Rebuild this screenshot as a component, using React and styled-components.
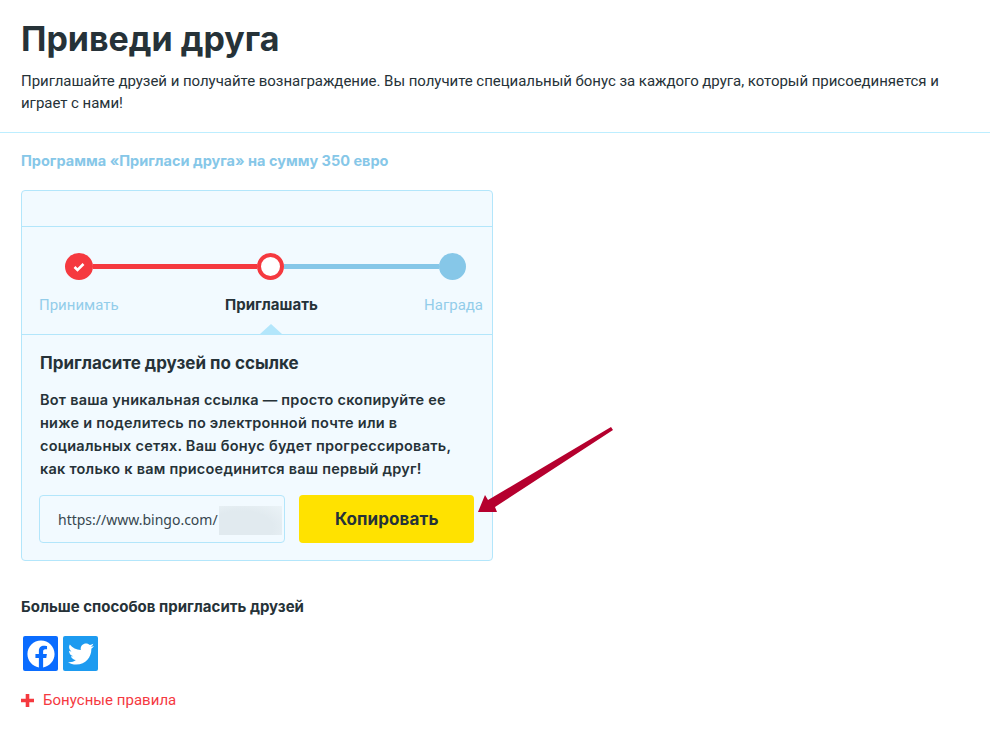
import styled, { createGlobalStyle } from "styled-components";
import { FaFacebook, FaTwitter } from "react-icons/fa";

const GlobalStyle = createGlobalStyle`
  html, body {
    margin: 0;
    padding: 0;
    background: #fff;
    font-family: Roboto, "Liberation Sans", sans-serif;
    color: #263238;
  }
`;

const Page = styled.div`
  position: relative;
  width: 990px;
  height: 742px;
  overflow: hidden;
`;

const Header = styled.header`
  padding: 18px 21px 18px;
  border-bottom: 1px solid #bdeeff;
`;

const Title = styled.h1`
  margin: 0 0 10px;
  font-family: Inter, sans-serif;
  font-size: 34px;
  line-height: 42px;
  font-weight: 700;
  color: #263238;
`;

const Lead = styled.p`
  margin: 0;
  width: 940px;
  font-size: 15px;
  line-height: 22px;
  letter-spacing: -0.035px;
  color: #263238;
`;

const Content = styled.main`
  padding: 18px 21px 0;
`;

const ProgramTitle = styled.h2`
  margin: 0 0 20px;
  font-family: Inter, sans-serif;
  font-size: 14.5px;
  line-height: 19px;
  font-weight: 700;
  color: #86c7e8;
`;

const Card = styled.section`
  width: 472px;
  box-sizing: border-box;
  background: #f2faff;
  border: 1px solid #b3e6fb;
  border-radius: 4px;
`;

const CardTop = styled.div`
  height: 35px;
  border-bottom: 1px solid #b3e6fb;
`;

const Stepper = styled.div`
  position: relative;
  height: 107px;
  border-bottom: 1px solid #b3e6fb;

  &::after {
    content: "";
    position: absolute;
    left: 238px;
    bottom: 0;
    border-left: 11px solid transparent;
    border-right: 11px solid transparent;
    border-bottom: 10px solid #b3e6fb;
  }
`;

const Track = styled.div`
  display: flex;
  align-items: center;
  padding: 26px 26px 0 43px;
`;

const Dot = styled.div`
  flex: none;
  display: flex;
  align-items: center;
  justify-content: center;
  box-sizing: border-box;
  width: ${(p) => p.$size || 27}px;
  height: 27px;
  border-radius: 50%;
  background: ${(p) => p.$fill};
  border: ${(p) => (p.$ring ? `4px solid ${p.$ring}` : "none")};
`;

const Line = styled.div`
  flex: none;
  width: ${(p) => p.$width}px;
  height: 5px;
  background: ${(p) => p.$color};
`;

const Labels = styled.div`
  display: grid;
  grid-template-columns: 186px auto 1fr;
  padding: 16px 9px 0 17px;
  line-height: 18px;
`;

const Label = styled.span`
  color: ${(p) => (p.$active ? "#263238" : "#93cdea")};
  font-family: ${(p) => (p.$active ? "Inter, sans-serif" : "Roboto, sans-serif")};
  font-weight: ${(p) => (p.$active ? 700 : 400)};
  font-size: 15px;
  justify-self: ${(p) => (p.$end ? "end" : "start")};
`;

const CardBody = styled.div`
  padding: 18px 18px 17px;
`;

const BodyTitle = styled.h3`
  margin: 0 0 15px;
  font-family: Inter, sans-serif;
  font-size: 17px;
  line-height: 20px;
  font-weight: 700;
  color: #263238;
`;

const BodyText = styled.p`
  margin: 0 0 15px;
  max-width: 420px;
  font-family: Inter, sans-serif;
  font-size: 14.5px;
  line-height: 23px;
  font-weight: 600;
  letter-spacing: 0.24px;
  color: #263238;
`;

const CopyRow = styled.div`
  display: flex;
  gap: 14px;
  margin-left: -1px;
`;

const LinkBox = styled.div`
  position: relative;
  width: 247px;
  height: 48px;
  box-sizing: border-box;
  padding-left: 18px;
  display: flex;
  align-items: center;
  border: 1px solid #b3e6fb;
  border-radius: 4px;
  font-family: "Noto Sans", sans-serif;
  font-size: 14px;
  color: #37474f;
`;

const Blur = styled.div`
  position: absolute;
  left: 179px;
  top: 10px;
  width: 63px;
  height: 29px;
  background: radial-gradient(ellipse at 35% 75%, #e1eaef 55%, #ebf3f7 100%);
`;

const CopyButton = styled.button`
  width: 175px;
  height: 48px;
  border: none;
  border-radius: 4px;
  background: #ffe200;
  color: #263238;
  font-family: Inter, sans-serif;
  font-size: 17px;
  font-weight: 700;
  letter-spacing: 0.1px;
`;

const MoreTitle = styled.h4`
  margin: 37px 0 20px;
  font-family: Inter, sans-serif;
  font-size: 15px;
  line-height: 18px;
  font-weight: 700;
  color: #263238;
`;

const Socials = styled.div`
  display: flex;
  gap: 5px;
  padding-left: 2px;
`;

const Social = styled.a`
  display: flex;
  align-items: center;
  justify-content: center;
  width: 35px;
  height: 35px;
  border-radius: 2px;
  color: #fff;
  background: ${(p) => p.$bg};
`;

const RulesLink = styled.a`
  display: flex;
  align-items: center;
  gap: 9px;
  margin-top: 20px;
  font-size: 15px;
  line-height: 18px;
  letter-spacing: 0.03px;
  color: #f5393f;
`;

const Arrow = styled.svg`
  position: absolute;
  left: 470px;
  top: 420px;
`;

export default function App() {
  return (
    <Page>
      <GlobalStyle />
      <Header>
        <Title>Приведи друга</Title>
        <Lead>
          Приглашайте друзей и получайте вознаграждение. Вы получите специальный бонус за каждого
          друга, который присоединяется и играет с нами!
        </Lead>
      </Header>
      <Content>
        <ProgramTitle>Программа «Пригласи друга» на сумму 350 евро</ProgramTitle>
        <Card>
          <CardTop />
          <Stepper>
            <Track>
              <Dot $fill="#f5393f" $size={28}>
                <svg width="12" height="10" viewBox="0 0 12 10">
                  <path d="M1.5 5 L4.5 8 L10.5 2" fill="none" stroke="#fff" strokeWidth="2.6" />
                </svg>
              </Dot>
              <Line $color="#f5393f" $width={164} />
              <Dot $fill="#fff" $ring="#f5393f" />
              <Line $color="#86c7e8" $width={155} />
              <Dot $fill="#86c7e8" />
            </Track>
            <Labels>
              <Label>Принимать</Label>
              <Label $active>Приглашать</Label>
              <Label $end>Награда</Label>
            </Labels>
          </Stepper>
          <CardBody>
            <BodyTitle>Пригласите друзей по ссылке</BodyTitle>
            <BodyText>
              Вот ваша уникальная ссылка — просто скопируйте ее ниже и поделитесь по электронной
              почте или в социальных сетях. Ваш бонус будет прогрессировать, как только к вам
              присоединится ваш первый друг!
            </BodyText>
            <CopyRow>
              <LinkBox>
                https://www.bingo.com/
                <Blur />
              </LinkBox>
              <CopyButton>Копировать</CopyButton>
            </CopyRow>
          </CardBody>
        </Card>
        <MoreTitle>Больше способов пригласить друзей</MoreTitle>
        <Socials>
          <Social $bg="#0a6cff">
            <FaFacebook size={28} />
          </Social>
          <Social $bg="#1d9bf0">
            <FaTwitter size={26} />
          </Social>
        </Socials>
        <RulesLink>
          <svg width="13" height="13" viewBox="0 0 13 13">
            <path d="M6.5 0 V13 M0 6.5 H13" stroke="#f5393f" strokeWidth="3.6" />
          </svg>
          Бонусные правила
        </RulesLink>
      </Content>
      <Arrow width="150" height="100" viewBox="0 0 150 100">
        <path d="M8 92 L15 75 L18 80 L141 7 L143 10 L25 87 L27 92 Z" fill="#b5002e" />
      </Arrow>
    </Page>
  );
}
